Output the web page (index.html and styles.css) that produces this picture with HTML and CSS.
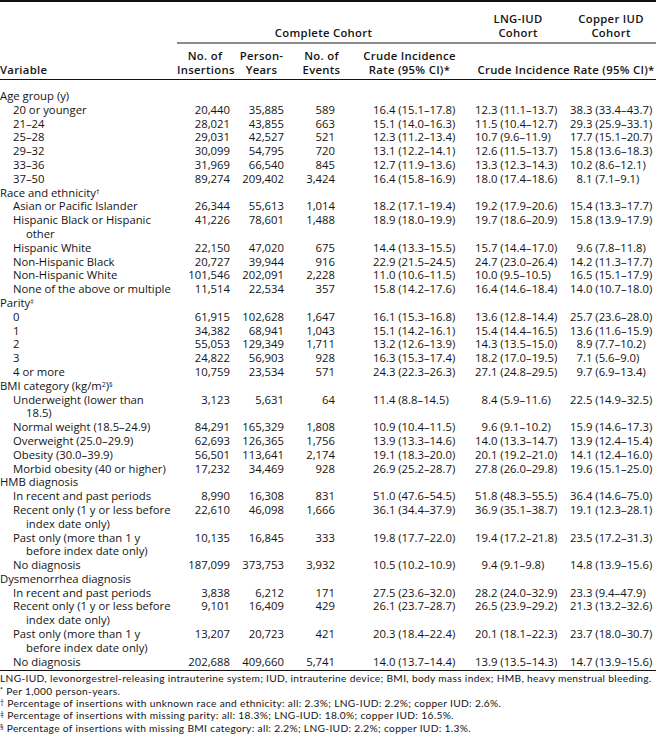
FILE: index.html
```html
<!DOCTYPE html>
<html lang="en">
<head>
<meta charset="utf-8">
<title>Table</title>
<link rel="stylesheet" href="styles.css">
</head>
<body>
<div class="page">
<table class="tbl">
<colgroup>
<col class="c-var"><col class="c-ins"><col class="c-py"><col class="c-ev"><col class="c-cr"><col class="c-lng"><col class="c-cu">
</colgroup>
<thead>
<tr class="h1">
<th class="hvar" rowspan="2">Variable</th>
<th class="grp grp-complete" colspan="4"><div class="grp-line">Complete Cohort</div></th>
<th class="grp grp-lng"><div class="grp-line">LNG-IUD<br>Cohort</div></th>
<th class="grp grp-cu"><div class="grp-line">Copper IUD<br>Cohort</div></th>
</tr>
<tr class="h2">
<th class="hnum h-ins">No. of<br>Insertions</th>
<th class="hnum h-py">Person-<br>Years</th>
<th class="hnum h-ev">No. of<br>Events</th>
<th class="hnum h-cr">Crude Incidence<br>Rate (95% CI)*</th>
<th class="hnum h-both" colspan="2">Crude Incidence Rate (95% CI)*</th>
</tr>
</thead>
<tbody>
<tr class="cat first"><td class="v">Age group (y)</td><td></td><td></td><td></td><td></td><td></td><td></td></tr>
<tr><td class="v sub">20 or younger</td><td class="n ins">20,440</td><td class="n py">35,885</td><td class="n ev">589</td><td class="r cr">16.4 (15.1–17.8)</td><td class="r lng">12.3 (11.1–13.7)</td><td class="r cu">38.3 (33.4–43.7)</td></tr>
<tr><td class="v sub">21–24</td><td class="n ins">28,021</td><td class="n py">43,855</td><td class="n ev">663</td><td class="r cr">15.1 (14.0–16.3)</td><td class="r lng">11.5 (10.4–12.7)</td><td class="r cu">29.3 (25.9–33.1)</td></tr>
<tr><td class="v sub">25–28</td><td class="n ins">29,031</td><td class="n py">42,527</td><td class="n ev">521</td><td class="r cr">12.3 (11.2–13.4)</td><td class="r lng">10.7 (9.6–11.9)</td><td class="r cu">17.7 (15.1–20.7)</td></tr>
<tr><td class="v sub">29–32</td><td class="n ins">30,099</td><td class="n py">54,795</td><td class="n ev">720</td><td class="r cr">13.1 (12.2–14.1)</td><td class="r lng">12.6 (11.5–13.7)</td><td class="r cu">15.8 (13.6–18.3)</td></tr>
<tr><td class="v sub">33–36</td><td class="n ins">31,969</td><td class="n py">66,540</td><td class="n ev">845</td><td class="r cr">12.7 (11.9–13.6)</td><td class="r lng">13.3 (12.3–14.3)</td><td class="r cu">10.2 (8.6–12.1)</td></tr>
<tr><td class="v sub">37–50</td><td class="n ins">89,274</td><td class="n py">209,402</td><td class="n ev">3,424</td><td class="r cr">16.4 (15.8–16.9)</td><td class="r lng">18.0 (17.4–18.6)</td><td class="r cu">&#8199;8.1 (7.1–9.1)</td></tr>
<tr class="cat"><td class="v">Race and ethnicity<sup class="fn">†</sup></td><td></td><td></td><td></td><td></td><td></td><td></td></tr>
<tr><td class="v sub">Asian or Pacific Islander</td><td class="n ins">26,344</td><td class="n py">55,613</td><td class="n ev">1,014</td><td class="r cr">18.2 (17.1–19.4)</td><td class="r lng">19.2 (17.9–20.6)</td><td class="r cu">15.4 (13.3–17.7)</td></tr>
<tr><td class="v sub">Hispanic Black or Hispanic<br>other</td><td class="n ins">41,226</td><td class="n py">78,601</td><td class="n ev">1,488</td><td class="r cr">18.9 (18.0–19.9)</td><td class="r lng">19.7 (18.6–20.9)</td><td class="r cu">15.8 (13.9–17.9)</td></tr>
<tr><td class="v sub">Hispanic White</td><td class="n ins">22,150</td><td class="n py">47,020</td><td class="n ev">675</td><td class="r cr">14.4 (13.3–15.5)</td><td class="r lng">15.7 (14.4–17.0)</td><td class="r cu">&#8199;9.6 (7.8–11.8)</td></tr>
<tr><td class="v sub">Non-Hispanic Black</td><td class="n ins">20,727</td><td class="n py">39,944</td><td class="n ev">916</td><td class="r cr">22.9 (21.5–24.5)</td><td class="r lng">24.7 (23.0–26.4)</td><td class="r cu">14.2 (11.3–17.7)</td></tr>
<tr><td class="v sub">Non-Hispanic White</td><td class="n ins">101,546</td><td class="n py">202,091</td><td class="n ev">2,228</td><td class="r cr">11.0 (10.6–11.5)</td><td class="r lng">10.0 (9.5–10.5)</td><td class="r cu">16.5 (15.1–17.9)</td></tr>
<tr><td class="v sub">None of the above or multiple</td><td class="n ins">11,514</td><td class="n py">22,534</td><td class="n ev">357</td><td class="r cr">15.8 (14.2–17.6)</td><td class="r lng">16.4 (14.6–18.4)</td><td class="r cu">14.0 (10.7–18.0)</td></tr>
<tr class="cat"><td class="v">Parity<sup class="fn">‡</sup></td><td></td><td></td><td></td><td></td><td></td><td></td></tr>
<tr><td class="v sub">0</td><td class="n ins">61,915</td><td class="n py">102,628</td><td class="n ev">1,647</td><td class="r cr">16.1 (15.3–16.8)</td><td class="r lng">13.6 (12.8–14.4)</td><td class="r cu">25.7 (23.6–28.0)</td></tr>
<tr><td class="v sub">1</td><td class="n ins">34,382</td><td class="n py">68,941</td><td class="n ev">1,043</td><td class="r cr">15.1 (14.2–16.1)</td><td class="r lng">15.4 (14.4–16.5)</td><td class="r cu">13.6 (11.6–15.9)</td></tr>
<tr><td class="v sub">2</td><td class="n ins">55,053</td><td class="n py">129,349</td><td class="n ev">1,711</td><td class="r cr">13.2 (12.6–13.9)</td><td class="r lng">14.3 (13.5–15.0)</td><td class="r cu">&#8199;8.9 (7.7–10.2)</td></tr>
<tr><td class="v sub">3</td><td class="n ins">24,822</td><td class="n py">56,903</td><td class="n ev">928</td><td class="r cr">16.3 (15.3–17.4)</td><td class="r lng">18.2 (17.0–19.5)</td><td class="r cu">&#8199;7.1 (5.6–9.0)</td></tr>
<tr><td class="v sub">4 or more</td><td class="n ins">10,759</td><td class="n py">23,534</td><td class="n ev">571</td><td class="r cr">24.3 (22.3–26.3)</td><td class="r lng">27.1 (24.8–29.5)</td><td class="r cu">&#8199;9.7 (6.9–13.4)</td></tr>
<tr class="cat"><td class="v">BMI category (kg/m<sup class="sq">2</sup>)<sup class="fn">§</sup></td><td></td><td></td><td></td><td></td><td></td><td></td></tr>
<tr><td class="v sub">Underweight (lower than<br>18.5)</td><td class="n ins">3,123</td><td class="n py">5,631</td><td class="n ev">64</td><td class="r cr">11.4 (8.8–14.5)</td><td class="r lng">&#8199;8.4 (5.9–11.6)</td><td class="r cu">22.5 (14.9–32.5)</td></tr>
<tr><td class="v sub">Normal weight (18.5–24.9)</td><td class="n ins">84,291</td><td class="n py">165,329</td><td class="n ev">1,808</td><td class="r cr">10.9 (10.4–11.5)</td><td class="r lng">&#8199;9.6 (9.1–10.2)</td><td class="r cu">15.9 (14.6–17.3)</td></tr>
<tr><td class="v sub">Overweight (25.0–29.9)</td><td class="n ins">62,693</td><td class="n py">126,365</td><td class="n ev">1,756</td><td class="r cr">13.9 (13.3–14.6)</td><td class="r lng">14.0 (13.3–14.7)</td><td class="r cu">13.9 (12.4–15.4)</td></tr>
<tr><td class="v sub">Obesity (30.0–39.9)</td><td class="n ins">56,501</td><td class="n py">113,641</td><td class="n ev">2,174</td><td class="r cr">19.1 (18.3–20.0)</td><td class="r lng">20.1 (19.2–21.0)</td><td class="r cu">14.1 (12.4–16.0)</td></tr>
<tr><td class="v sub">Morbid obesity (40 or higher)</td><td class="n ins">17,232</td><td class="n py">34,469</td><td class="n ev">928</td><td class="r cr">26.9 (25.2–28.7)</td><td class="r lng">27.8 (26.0–29.8)</td><td class="r cu">19.6 (15.1–25.0)</td></tr>
<tr class="cat"><td class="v">HMB diagnosis</td><td></td><td></td><td></td><td></td><td></td><td></td></tr>
<tr><td class="v sub">In recent and past periods</td><td class="n ins">8,990</td><td class="n py">16,308</td><td class="n ev">831</td><td class="r cr">51.0 (47.6–54.5)</td><td class="r lng">51.8 (48.3–55.5)</td><td class="r cu">36.4 (14.6–75.0)</td></tr>
<tr><td class="v sub">Recent only (1 y or less before<br>index date only)</td><td class="n ins">22,610</td><td class="n py">46,098</td><td class="n ev">1,666</td><td class="r cr">36.1 (34.4–37.9)</td><td class="r lng">36.9 (35.1–38.7)</td><td class="r cu">19.1 (12.3–28.1)</td></tr>
<tr><td class="v sub">Past only (more than 1 y<br>before index date only)</td><td class="n ins">10,135</td><td class="n py">16,845</td><td class="n ev">333</td><td class="r cr">19.8 (17.7–22.0)</td><td class="r lng">19.4 (17.2–21.8)</td><td class="r cu">23.5 (17.2–31.3)</td></tr>
<tr><td class="v sub">No diagnosis</td><td class="n ins">187,099</td><td class="n py">373,753</td><td class="n ev">3,932</td><td class="r cr">10.5 (10.2–10.9)</td><td class="r lng">&#8199;9.4 (9.1–9.8)</td><td class="r cu">14.8 (13.9–15.6)</td></tr>
<tr class="cat"><td class="v">Dysmenorrhea diagnosis</td><td></td><td></td><td></td><td></td><td></td><td></td></tr>
<tr><td class="v sub">In recent and past periods</td><td class="n ins">3,838</td><td class="n py">6,212</td><td class="n ev">171</td><td class="r cr">27.5 (23.6–32.0)</td><td class="r lng">28.2 (24.0–32.9)</td><td class="r cu">23.3 (9.4–47.9)</td></tr>
<tr><td class="v sub">Recent only (1 y or less before<br>index date only)</td><td class="n ins">9,101</td><td class="n py">16,409</td><td class="n ev">429</td><td class="r cr">26.1 (23.7–28.7)</td><td class="r lng">26.5 (23.9–29.2)</td><td class="r cu">21.3 (13.2–32.6)</td></tr>
<tr><td class="v sub">Past only (more than 1 y<br>before index date only)</td><td class="n ins">13,207</td><td class="n py">20,723</td><td class="n ev">421</td><td class="r cr">20.3 (18.4–22.4)</td><td class="r lng">20.1 (18.1–22.3)</td><td class="r cu">23.7 (18.0–30.7)</td></tr>
<tr class="last"><td class="v sub">No diagnosis</td><td class="n ins">202,688</td><td class="n py">409,660</td><td class="n ev">5,741</td><td class="r cr">14.0 (13.7–14.4)</td><td class="r lng">13.9 (13.5–14.3)</td><td class="r cu">14.7 (13.9–15.6)</td></tr>
</tbody>
</table>
<div class="notes">
<p class="note">LNG-IUD, levonorgestrel-releasing intrauterine system; IUD, intrauterine device; BMI, body mass index; HMB, heavy menstrual bleeding.</p>
<p class="note"><span class="nfn">*</span> Per 1,000 person-years.</p>
<p class="note"><span class="nfn">†</span> Percentage of insertions with unknown race and ethnicity: all: 2.3%; LNG-IUD: 2.2%; copper IUD: 2.6%.</p>
<p class="note"><span class="nfn">‡</span> Percentage of insertions with missing parity: all: 18.3%; LNG-IUD: 18.0%; copper IUD: 16.5%.</p>
<p class="note"><span class="nfn">§</span> Percentage of insertions with missing BMI category: all: 2.2%; LNG-IUD: 2.2%; copper IUD: 1.3%.</p>
</div>
</div>
</body>
</html>
```

FILE: styles.css
```css
html, body {
  margin: 0;
  padding: 0;
  background: #ffffff;
}

body {
  font-family: "Open Sans", "Lato", "DejaVu Sans", sans-serif;
  color: #141414;
  font-size: 11.3px;
  font-variant-numeric: tabular-nums lining-nums;
}

.page {
  width: 656px;
}

.tbl {
  width: 656px;
  border-collapse: collapse;
  table-layout: fixed;
  border-top: 2px solid #111;
  border-bottom: 1px solid #111;
}

.c-var { width: 177px; }
.c-ins { width: 56px; }
.c-py { width: 57px; }
.c-ev { width: 55px; }
.c-cr { width: 125px; }
.c-lng { width: 96px; }
.c-cu { width: 90px; }

.tbl th, .tbl td {
  padding: 0;
  line-height: 13.8px;
  vertical-align: top;
  font-weight: normal;
}

.tbl thead th {
  font-weight: 600;
  line-height: 13.5px;
  text-align: center;
  letter-spacing: 0.3px;
}

.h1 th {
  padding-top: 10px;
  vertical-align: bottom;
}

.grp-line {
  border-bottom: 2px solid #8c8c8c;
  padding-bottom: 3px;
}

.grp-complete { padding-right: 7px; }
.grp-lng { padding-left: 8px; padding-right: 6px; }
.grp-cu { padding-left: 4px; }

.hvar {
  text-align: left !important;
  vertical-align: bottom !important;
  padding-bottom: 3px !important;
  border-bottom: 1px solid #111;
}

.h2 th {
  vertical-align: bottom;
  padding-top: 5px;
  padding-bottom: 3px;
  border-bottom: 1px solid #111;
  white-space: nowrap;
}

.tbl thead .h-ev { padding-left: 8px; }
.tbl thead .h-cr { padding-left: 4px; }
.tbl thead .h-both { padding-left: 6px; }

.tbl tbody tr.first td { padding-top: 9px; }
.tbl tbody tr.last td { padding-bottom: 2px; }

.v {
  white-space: nowrap;
  text-align: left;
}

.sub {
  padding-left: 26px !important;
  text-indent: -13px;
}

.n {
  text-align: right;
  white-space: nowrap;
}

.ins { padding-right: 3px !important; }
.py { padding-right: 6px !important; }
.ev { padding-right: 10px !important; }

.r {
  text-align: left;
  white-space: nowrap;
}

.cr { padding-left: 28px !important; }
.lng { padding-left: 5px !important; }
.cu { padding-left: 4px !important; }

.fn {
  font-size: 7px;
  line-height: 0;
  vertical-align: 3px;
}

.sq {
  font-size: 7px;
  line-height: 0;
  vertical-align: 3px;
}

.notes {
  padding-top: 1px;
}

.note {
  margin: 0;
  font-family: "Lato", "Open Sans", sans-serif;
  font-size: 10.2px;
  line-height: 12.3px;
  letter-spacing: 0.33px;
  white-space: nowrap;
}

.nfn {
  font-size: 7px;
  line-height: 0;
  vertical-align: 2px;
}
```
